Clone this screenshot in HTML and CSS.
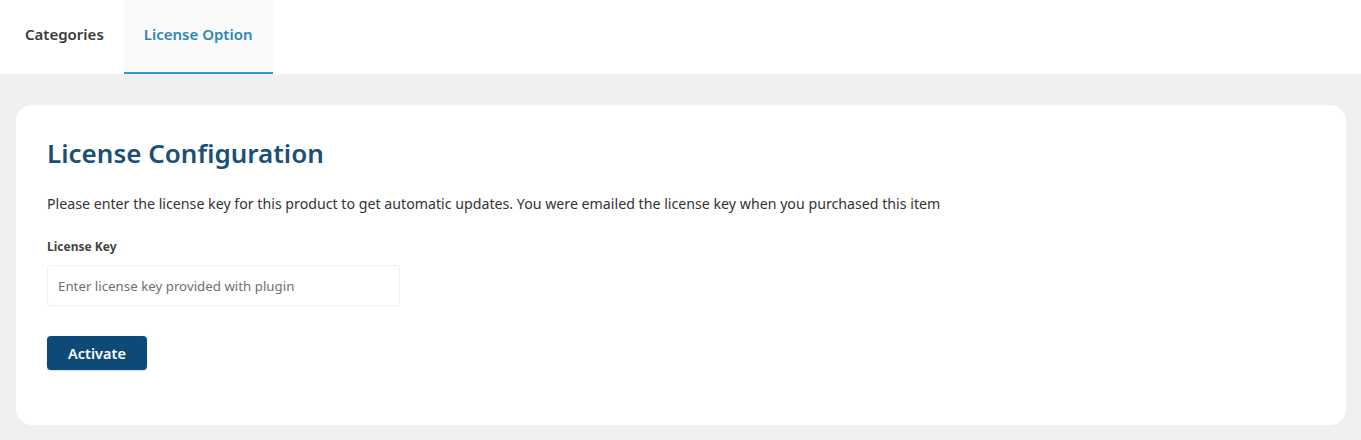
FILE: index.html
```html
<!DOCTYPE html>
<html lang="en">
<head>
<meta charset="utf-8">
<title>License Option</title>
<link rel="stylesheet" href="styles.css">
</head>
<body>
<header class="tabs">
  <a class="tab">Categories</a>
  <a class="tab active">License Option</a>
</header>
<main class="content">
  <section class="card">
    <h1 class="title">License Configuration</h1>
    <p class="desc">Please enter the license key for this product to get automatic updates. You were emailed the license key when you purchased this item</p>
    <label class="label" for="key">License Key</label>
    <input class="input" id="key" type="text" placeholder="Enter license key provided with plugin">
    <button class="btn" type="button">Activate</button>
  </section>
</main>
</body>
</html>
```
FILE: styles.css
```css
* { box-sizing: border-box; }
html, body { margin: 0; padding: 0; }
body {
  font-family: "Noto Sans", "Open Sans", sans-serif;
  background: #f0f0f0;
  color: #333;
  height: 440px;
  overflow: hidden;
}
.tabs {
  display: flex;
  height: 74px;
  background: #fff;
  padding-left: 5px;
}
.tab {
  display: flex;
  align-items: center;
  padding: 0 20px 4px;
  font-size: 15px;
  font-weight: 600;
  color: #3a3a3a;
  border-bottom: 2px solid transparent;
}
.tab.active {
  color: #2f86b5;
  background: #fafafa;
  border-bottom-color: #3597c7;
}
.content {
  padding: 31px 15px 15px 16px;
}
.card {
  background: #fff;
  border-radius: 16px;
  height: 320px;
  padding: 30px 31px;
  display: flex;
  flex-direction: column;
  align-items: flex-start;
}
.title {
  margin: 0;
  font-size: 26px;
  font-weight: 600;
  color: #1b4f78;
  line-height: 36px;
}
.desc {
  margin: 24px 0 0;
  font-size: 14.2px;
  line-height: 18px;
  color: #333;
}
.label {
  margin-top: 27px;
  font-size: 12px;
  font-weight: 700;
  color: #444;
  line-height: 14px;
}
.input {
  margin-top: 11px;
  width: 353px;
  height: 41px;
  border: 1px solid #f0f0f0;
  border-radius: 3px;
  padding: 0 10px;
  font-family: inherit;
  font-size: 13.3px;
  color: #333;
  background: #fff;
  outline: none;
}
.input::placeholder { color: #707070; }
.btn {
  margin-top: 30px;
  width: 100px;
  height: 34px;
  border: none;
  border-radius: 4px;
  background: #0e4a78;
  color: #fff;
  font-family: inherit;
  font-size: 14.5px;
  font-weight: 600;
  box-shadow: 0 1px 2px rgba(0,0,0,0.15);
}
```
